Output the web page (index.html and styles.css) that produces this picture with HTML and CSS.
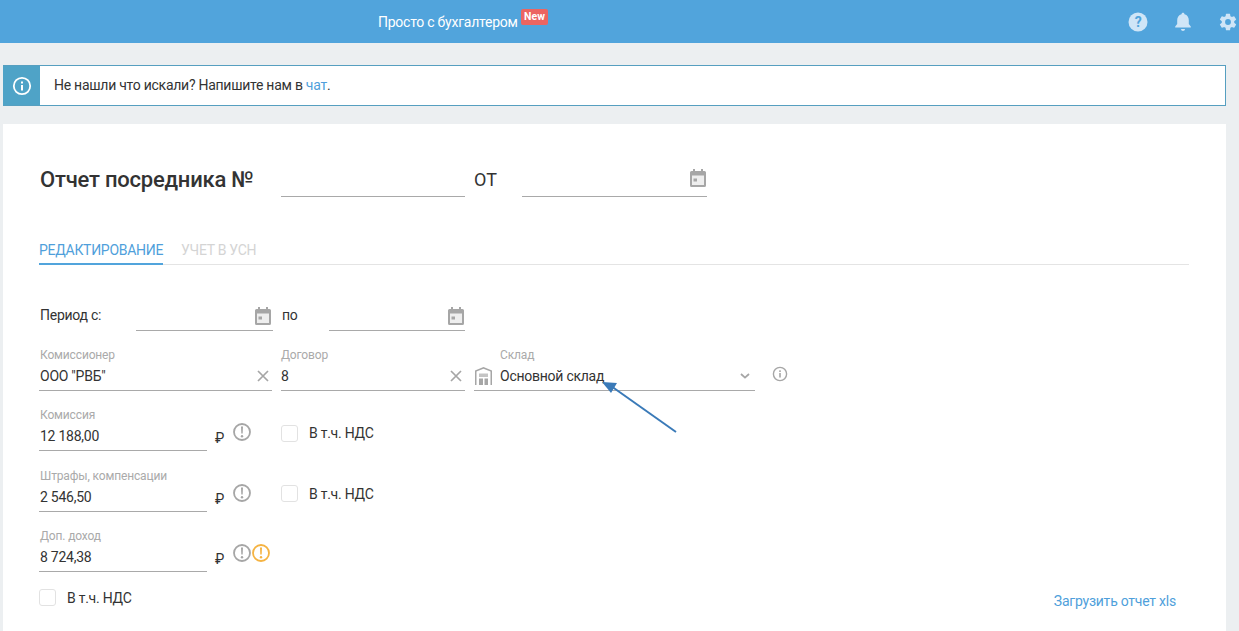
FILE: index.html
```html
<!DOCTYPE html>
<html lang="ru">
<head>
<meta charset="utf-8">
<title>Отчет посредника</title>
<link rel="stylesheet" href="styles.css">
</head>
<body>
<svg class="defs" width="0" height="0" aria-hidden="true">
  <defs>
    <symbol id="cal" viewBox="0 0 16 18">
      <rect x="1" y="6" width="14" height="11" fill="#eeeeee"/>
      <path fill="#a6a6a6" d="M3 0h2v2h6V0h2v2h1.500A1.500 1.500 0 0 1 16 3.500V16.500A1.500 1.500 0 0 1 14.500 18H1.500A1.500 1.500 0 0 1 0 16.500V3.500A1.500 1.500 0 0 1 1.500 2H3zM2 6.500V16h12V6.500z"/>
      <rect fill="#a6a6a6" x="3.500" y="9.500" width="3.500" height="3"/>
    </symbol>
    <symbol id="warn" viewBox="0 0 18 18">
      <circle cx="9" cy="9" r="8" fill="none" stroke="currentColor" stroke-width="1.800"/>
      <path fill="currentColor" d="M8 3.600h2l-.3 7H8.300z"/>
      <circle cx="9" cy="13.200" r="1.200" fill="currentColor"/>
    </symbol>
    <symbol id="cross" viewBox="0 0 12 12">
      <path d="M1 1l10 10M11 1L1 11" fill="none" stroke="#a6a6a6" stroke-width="1.700"/>
    </symbol>
  </defs>
</svg>

<header class="topbar">
  <a class="topbar-link">Просто с бухгалтером<span class="badge">New</span></a>
  <div class="topbar-icons">
    <svg class="top-icon" viewBox="0 0 20 20"><circle cx="10" cy="10" r="9.500" fill="#cfe5f7"/><text x="10" y="15" text-anchor="middle" class="q-mark">?</text></svg>
    <svg class="top-icon" viewBox="0 0 20 20"><path fill="#cfe5f7" d="M10 .8c.9 0 1.500.6 1.500 1.500 2.900.7 4.300 3 4.300 6v3.600l2 2.600v.9H2.200v-.9l2-2.600V8.300c0-3 1.400-5.300 4.300-6C8.500 1.400 9.100.8 10 .8zM8 17h4c0 1.200-.9 2-2 2s-2-.8-2-2z"/></svg>
    <svg class="top-icon" viewBox="0 0 24 24"><path fill="#cfe5f7" fill-rule="evenodd" d="M19.430 12.980c.04-.32.070-.64.070-.98s-.03-.66-.07-.98l2.110-1.650a.5.500 0 0 0 .12-.64l-2-3.460a.5.500 0 0 0-.61-.22l-2.490 1a7.300 7.300 0 0 0-1.690-.98l-.38-2.650A.49.490 0 0 0 14 2h-4a.49.490 0 0 0-.49.420l-.38 2.650c-.61.25-1.170.59-1.690.98l-2.490-1a.5.500 0 0 0-.61.22l-2 3.460a.49.490 0 0 0 .12.640l2.110 1.650c-.04.32-.07.65-.07.98s.03.66.07.98l-2.110 1.650a.5.500 0 0 0-.12.640l2 3.460c.12.220.39.300.61.220l2.490-1c.52.400 1.080.73 1.690.98l.38 2.650c.03.240.24.420.49.420h4c.25 0 .46-.18.490-.42l.38-2.650a7.700 7.700 0 0 0 1.690-.98l2.490 1c.23.090.49 0 .61-.22l2-3.460a.5.500 0 0 0-.12-.64zM12 15.500a3.500 3.500 0 1 1 0-7 3.500 3.500 0 0 1 0 7z"/></svg>
  </div>
</header>

<main class="page">
  <section class="notice">
    <div class="notice-icon">
      <svg width="20" height="20" viewBox="0 0 20 20"><circle cx="10" cy="10" r="8.200" fill="none" stroke="#fff" stroke-width="1.800"/><rect x="9" y="9" width="2" height="5.500" fill="#fff"/><rect x="9" y="5.500" width="2" height="2" fill="#fff"/></svg>
    </div>
    <p class="notice-text">Не нашли что искали? Напишите нам в <a class="link">чат</a>.</p>
  </section>

  <section class="card">
    <div class="title-row">
      <h1 class="title">Отчет посредника №</h1>
      <div class="line-field num-field"></div>
      <span class="from">ОТ</span>
      <div class="line-field date-field"><svg class="cal cal-date"><use href="#cal"/></svg></div>
    </div>

    <nav class="tabs">
      <a class="tab tab-active">РЕДАКТИРОВАНИЕ</a>
      <a class="tab">УЧЕТ В УСН</a>
    </nav>

    <div class="period-row">
      <span class="period-label">Период с:</span>
      <div class="line-field period-from"><svg class="cal cal-from"><use href="#cal"/></svg></div>
      <span class="period-to">по</span>
      <div class="line-field period-until"><svg class="cal cal-until"><use href="#cal"/></svg></div>
    </div>

    <div class="party-row">
      <div class="field w-agent">
        <label class="field-label">Комиссионер</label>
        <div class="field-value">ООО "РВБ"<svg class="cross"><use href="#cross"/></svg></div>
      </div>
      <div class="field w-contract">
        <label class="field-label">Договор</label>
        <div class="field-value">8<svg class="cross"><use href="#cross"/></svg></div>
      </div>
      <div class="field w-store">
        <label class="field-label store-label">Склад</label>
        <div class="field-value">
          <svg class="store-icon" viewBox="0 0 17 18"><path fill="#a6a6a6" fill-rule="evenodd" d="M8.500 0 17 3.500V18h-1.500V4.500L8.500 1.700 1.500 4.500V18H0V3.500z"/><path fill="#c4c4c4" d="M4 6.500h9V10H4z"/><path fill="#a6a6a6" d="M4 11.500h4V18H4zM9.500 11.500H13V18H9.500z"/></svg>
          <span>Основной склад</span>
          <svg class="chevron" viewBox="0 0 10 6"><path d="M1 1l4 3.600L9 1" fill="none" stroke="#a6a6a6" stroke-width="1.800"/></svg>
        </div>
      </div>
      <svg class="store-info" viewBox="0 0 16 16"><circle cx="8" cy="8" r="6.600" fill="none" stroke="#a6a6a6" stroke-width="1.400"/><rect x="7.200" y="7" width="1.600" height="4.500" fill="#a6a6a6"/><rect x="7.200" y="4.300" width="1.600" height="1.700" fill="#a6a6a6"/></svg>
    </div>

    <div class="money-row">
      <div class="field w-money">
        <label class="field-label">Комиссия</label>
        <div class="field-value">12 188,00</div>
      </div>
      <span class="rub">₽</span>
      <svg class="warn"><use href="#warn"/></svg>
      <label class="check check-inline"><span class="box"></span>В т.ч. НДС</label>
    </div>

    <div class="money-row">
      <div class="field w-money">
        <label class="field-label">Штрафы, компенсации</label>
        <div class="field-value">2 546,50</div>
      </div>
      <span class="rub">₽</span>
      <svg class="warn"><use href="#warn"/></svg>
      <label class="check check-inline"><span class="box"></span>В т.ч. НДС</label>
    </div>

    <div class="money-row">
      <div class="field w-money">
        <label class="field-label">Доп. доход</label>
        <div class="field-value">8 724,38</div>
      </div>
      <span class="rub">₽</span>
      <svg class="warn"><use href="#warn"/></svg>
      <svg class="warn warn-orange"><use href="#warn"/></svg>
    </div>

    <div class="bottom-row">
      <label class="check"><span class="box"></span>В т.ч. НДС</label>
      <a class="link upload">Загрузить отчет xls</a>
    </div>
  </section>
</main>

<svg class="arrow" width="90" height="70" viewBox="0 0 90 70" aria-hidden="true">
  <path d="M12 11 77 57" stroke="#3a7ab8" stroke-width="2" fill="none"/>
  <path d="M3 7 18 8 12 18z" fill="#3a7ab8"/>
</svg>
</body>
</html>
```

FILE: styles.css
```css
* { box-sizing: border-box; }
html, body { margin: 0; height: 631px; overflow: hidden; }
body {
  position: relative;
  background: #eceff1;
  font-family: Roboto, "Noto Sans", sans-serif;
  font-size: 14px;
  letter-spacing: -0.25px;
  color: #333;
}
.defs { position: absolute; }
.topbar {
  height: 43px;
  background: #51a4dc;
  display: flex;
  align-items: center;
  padding-left: 378px;
}
.topbar-link { position: relative; color: #fff; font-size: 14px; letter-spacing: -0.25px; }
.badge {
  position: absolute;
  left: 143px;
  top: -5px;
  width: 27px;
  height: 16px;
  border-radius: 2px;
  background: #ec6561;
  color: #fff;
  font-size: 10.500px;
  font-weight: 700;
  line-height: 15px;
  letter-spacing: 0;
  text-align: center;
}
.topbar-icons {
  margin-left: auto;
  display: flex;
  align-items: center;
  gap: 25px;
  padding-right: 1px;
}
.top-icon { width: 20px; height: 20px; display: block; }
.q-mark { font: 700 14px Roboto, sans-serif; fill: #51a4dc; }

.page { padding: 22px 13px 0 3px; }
.notice {
  height: 41px;
  display: flex;
  align-items: center;
  background: #fff;
  border: 1px solid #569fc0;
  border-left: 0;
  margin-bottom: 18px;
}
.notice-icon {
  width: 37px;
  height: 39px;
  background: #4fa3c7;
  display: flex;
  align-items: center;
  justify-content: center;
}
.notice-text { margin: 0 0 2px 14px; font-size: 14px; letter-spacing: -0.26px; }
.link { color: #4f9fdb; }

.card {
  height: 520px;
  background: #fff;
  padding: 0 37px 0 36px;
}
.title-row {
  height: 73px;
  display: flex;
  align-items: flex-end;
}
.title {
  margin: 0 0 2px 1px;
  width: 241px;
  font-size: 22px;
  line-height: 30px;
  font-weight: 500;
  letter-spacing: -0.22px;
  color: #333;
}
.line-field {
  position: relative;
  height: 30px;
  border-bottom: 1px solid #a9a9a9;
  flex: none;
}
.num-field { width: 184px; }
.from { width: 48px; margin-left: 9px; font-size: 18px; line-height: 30px; margin-bottom: 2px; letter-spacing: 0; }
.date-field { width: 185px; }
.cal { position: absolute; width: 16px; height: 18px; }
.cal-date { right: 1px; top: 2px; }
.cal-from { right: 2px; top: 6px; }
.cal-until { right: 1px; top: 6px; }

.tabs {
  display: flex;
  margin-top: 37px;
  height: 31px;
  border-bottom: 1px solid #e4e4e4;
}
.tab {
  height: 31px;
  padding-top: 7px;
  margin-right: 18px;
  font-size: 14px;
  line-height: 18px;
  letter-spacing: -0.29px;
  color: #d4d4d4;
}
.tab-active { color: #4f9fdb; border-bottom: 2px solid #51a4dc; }

.period-row {
  display: flex;
  align-items: flex-end;
  height: 66px;
}
.period-label { width: 96px; margin-left: 1px; line-height: 20px; margin-bottom: 6px; }
.period-to { width: 47px; margin-left: 9px; line-height: 20px; margin-bottom: 6px; }
.period-from { width: 137px; }
.period-until { width: 136px; }

.party-row { display: flex; margin-top: 16px; height: 44px; }
.field { flex: none; }
.field-label {
  display: block;
  height: 16px;
  padding-left: 1px;
  font-size: 12px;
  line-height: 16px;
  letter-spacing: -0.15px;
  color: #aaa;
}
.field-value {
  display: flex;
  align-items: center;
  height: 28px;
  padding: 0 0 1px 1px;
  font-size: 14px;
  color: #333;
  border-bottom: 1px solid #a9a9a9;
}
.w-agent { width: 233px; margin-right: 9px; }
.w-contract { width: 184px; margin-right: 9px; }
.w-contract .field-label, .w-contract .field-value { padding-left: 0; }
.w-store { width: 281px; }
.w-money { width: 168px; }
.cross { width: 12px; height: 12px; margin-left: auto; margin-right: 3px; }
.store-label { padding-left: 26px; }
.store-icon { width: 17px; height: 18px; margin: 0 8px 0 0; }
.chevron { width: 10px; height: 6px; margin-left: auto; margin-right: 5px; }
.store-info { width: 16px; height: 16px; margin: 19px 0 0 17px; }

.money-row { display: flex; height: 44px; margin-top: 16.400px; }
.rub { width: 18px; margin: 19px 0 0 8px; font-size: 14px; line-height: 24px; flex: none; }
.warn { width: 18px; height: 18px; color: #a6a6a6; margin: 16px 0 0 0; flex: none; }
.warn-orange { color: #f5b342; margin-left: 1px; }
.check { display: flex; align-items: center; font-size: 14px; color: #333; }
.check-inline { margin: 17px 0 0 30px; height: 18px; }
.box {
  width: 17px;
  height: 17px;
  margin-right: 11px;
  border: 1px solid #e2e2e2;
  border-radius: 3px;
  background: #fff;
  flex: none;
}
.bottom-row {
  display: flex;
  justify-content: space-between;
  align-items: flex-start;
  margin-top: 17px;
  padding-right: 13px;
}
.upload { font-size: 14px; margin-top: 4px; letter-spacing: -0.23px; }

.arrow { position: absolute; left: 599px; top: 375px; }
```
